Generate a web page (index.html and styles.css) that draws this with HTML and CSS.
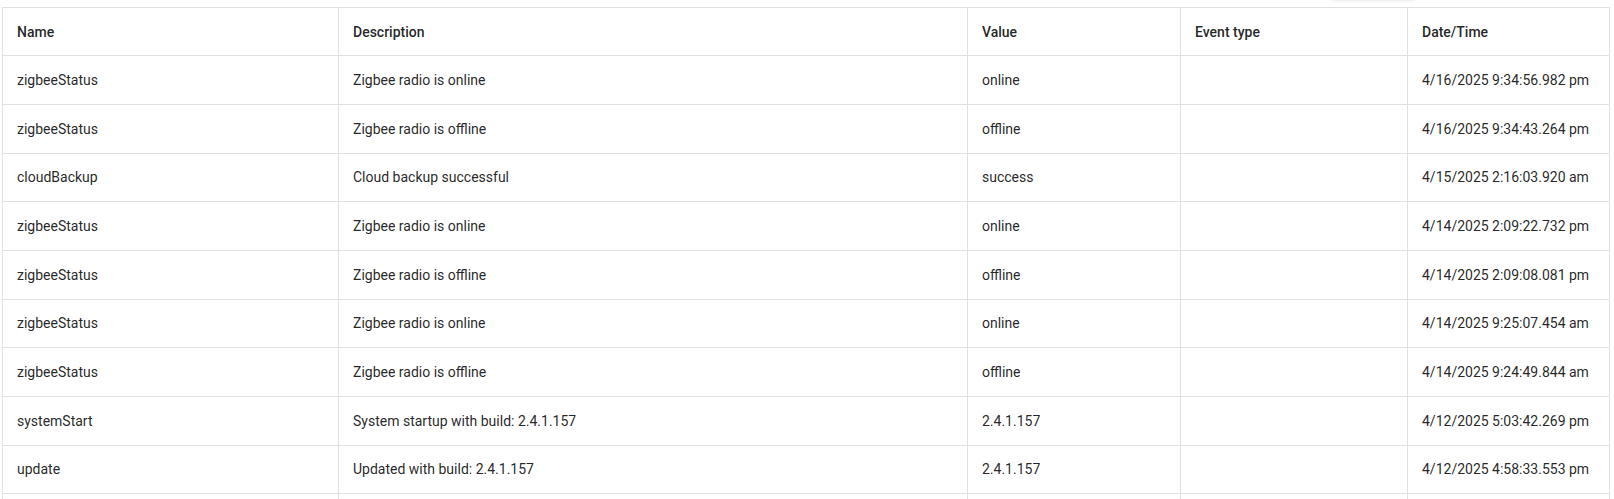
FILE: index.html
```html
<!DOCTYPE html>
<html lang="en">
<head>
<meta charset="utf-8">
<title>Events</title>
<link rel="stylesheet" href="styles.css">
</head>
<body>
<div class="page">
  <div class="floating-shadow"></div>
  <table class="events">
    <colgroup>
      <col class="c-name">
      <col class="c-desc">
      <col class="c-value">
      <col class="c-type">
      <col class="c-date">
    </colgroup>
    <thead>
      <tr><th>Name</th><th>Description</th><th>Value</th><th>Event type</th><th>Date/Time</th></tr>
    </thead>
    <tbody>
      <tr><td>zigbeeStatus</td><td>Zigbee radio is online</td><td>online</td><td></td><td>4/16/2025 9:34:56.982 pm</td></tr>
      <tr><td>zigbeeStatus</td><td>Zigbee radio is offline</td><td>offline</td><td></td><td>4/16/2025 9:34:43.264 pm</td></tr>
      <tr><td>cloudBackup</td><td>Cloud backup successful</td><td>success</td><td></td><td>4/15/2025 2:16:03.920 am</td></tr>
      <tr><td>zigbeeStatus</td><td>Zigbee radio is online</td><td>online</td><td></td><td>4/14/2025 2:09:22.732 pm</td></tr>
      <tr><td>zigbeeStatus</td><td>Zigbee radio is offline</td><td>offline</td><td></td><td>4/14/2025 2:09:08.081 pm</td></tr>
      <tr><td>zigbeeStatus</td><td>Zigbee radio is online</td><td>online</td><td></td><td>4/14/2025 9:25:07.454 am</td></tr>
      <tr><td>zigbeeStatus</td><td>Zigbee radio is offline</td><td>offline</td><td></td><td>4/14/2025 9:24:49.844 am</td></tr>
      <tr><td>systemStart</td><td>System startup with build: 2.4.1.157</td><td>2.4.1.157</td><td></td><td>4/12/2025 5:03:42.269 pm</td></tr>
      <tr><td>update</td><td>Updated with build: 2.4.1.157</td><td>2.4.1.157</td><td></td><td>4/12/2025 4:58:33.553 pm</td></tr>
      <tr class="partial"><td></td><td></td><td></td><td></td><td></td></tr>
    </tbody>
  </table>
</div>
</body>
</html>
```
FILE: styles.css
```css
html, body {
  margin: 0;
  padding: 0;
  background: #ffffff;
}

body {
  font-family: Roboto, "Liberation Sans", Arial, sans-serif;
  color: rgba(0, 0, 0, 0.87);
  overflow: hidden;
  height: 499px;
}

.page {
  position: relative;
  padding: 7px 0 0 2px;
}

.floating-shadow {
  position: absolute;
  left: 1332px;
  top: -20px;
  width: 84px;
  height: 20px;
  border-radius: 4px;
  background: #fff;
  box-shadow: 0 1px 3px rgba(0, 0, 0, 0.09);
}

.events {
  border-collapse: separate;
  border-spacing: 0;
  table-layout: fixed;
  width: 1608px;
  border-top: 1px solid #e0e0e0;
  border-left: 1px solid #e0e0e0;
  font-size: 14px;
}

.c-name { width: 336px; }
.c-desc { width: 629px; }
.c-value { width: 213px; }
.c-type { width: 227px; }
.c-date { width: 202px; }

.events th,
.events td {
  box-sizing: border-box;
  height: 48.67px;
  text-align: left;
  vertical-align: middle;
  padding: 0 8px 0 14px;
  line-height: 16px;
  border-right: 1px solid #e0e0e0;
  border-bottom: 1px solid #e0e0e0;
  white-space: nowrap;
  overflow: hidden;
}

.events th {
  height: 48.33px;
  font-weight: 500;
  color: rgba(0, 0, 0, 0.87);
}

.events td {
  font-weight: 400;
}

.events .partial td {
  height: 20px;
}
```
